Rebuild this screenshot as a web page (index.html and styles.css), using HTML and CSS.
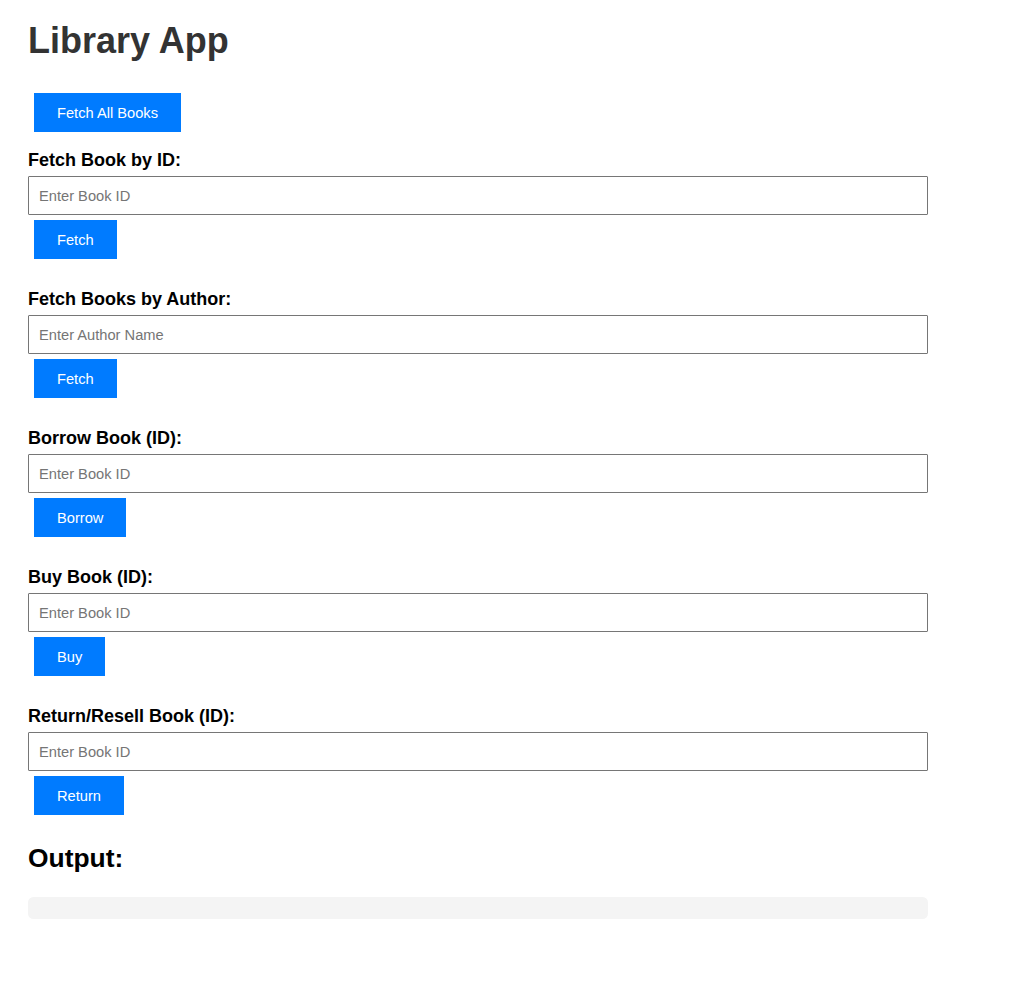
FILE: index.html
```html
<!DOCTYPE html>
<html lang="en">
<head>
<meta charset="utf-8">
<title>Library App</title>
<link rel="stylesheet" href="styles.css">
</head>
<body>
<div class="app">
  <h1 class="title">Library App</h1>
  <button class="btn btn-all">Fetch All Books</button>

  <div class="section">
    <label class="label">Fetch Book by ID:</label>
    <input class="field" type="text" placeholder="Enter Book ID">
    <button class="btn">Fetch</button>
  </div>

  <div class="section">
    <label class="label">Fetch Books by Author:</label>
    <input class="field" type="text" placeholder="Enter Author Name">
    <button class="btn">Fetch</button>
  </div>

  <div class="section">
    <label class="label">Borrow Book (ID):</label>
    <input class="field" type="text" placeholder="Enter Book ID">
    <button class="btn">Borrow</button>
  </div>

  <div class="section">
    <label class="label">Buy Book (ID):</label>
    <input class="field" type="text" placeholder="Enter Book ID">
    <button class="btn">Buy</button>
  </div>

  <div class="section section-last">
    <label class="label">Return/Resell Book (ID):</label>
    <input class="field" type="text" placeholder="Enter Book ID">
    <button class="btn">Return</button>
  </div>

  <h2 class="out-title">Output:</h2>
  <pre class="output"></pre>
</div>
</body>
</html>
```

FILE: styles.css
```css
html, body {
  margin: 0;
  padding: 0;
  background: #ffffff;
}

body {
  font-family: "Liberation Sans", Arial, sans-serif;
  color: #000;
}

.app {
  display: flex;
  flex-direction: column;
  align-items: flex-start;
  width: 900px;
  margin-left: 28px;
  padding-bottom: 40px;
}

.title {
  margin: 21px 0 0;
  font-size: 36px;
  line-height: 40px;
  font-weight: bold;
  color: #333333;
}

.btn {
  display: block;
  box-sizing: border-box;
  margin: 5px 0 0 6px;
  padding: 1px 23px 0;
  height: 39px;
  border: none;
  border-radius: 0;
  background: #007bff;
  color: #ffffff;
  font-family: "Liberation Sans", Arial, sans-serif;
  font-size: 14.67px;
  line-height: 17px;
  cursor: pointer;
}

.btn-all {
  margin-top: 32px;
  margin-bottom: 18px;
}

.section {
  display: flex;
  flex-direction: column;
  align-items: flex-start;
  width: 900px;
  margin-bottom: 30px;
}

.section-last {
  margin-bottom: 28px;
}

.label {
  display: block;
  font-size: 18px;
  line-height: 20px;
  font-weight: bold;
  color: #000;
}

.field {
  display: block;
  box-sizing: border-box;
  width: 900px;
  height: 39px;
  margin: 6px 0 0;
  padding: 0 10px;
  border: 1px solid #767676;
  border-radius: 1px;
  font-family: "Liberation Sans", Arial, sans-serif;
  font-size: 14.67px;
  color: #000;
  background: #fff;
  outline: none;
}

.field::placeholder {
  color: #757575;
}

.out-title {
  margin: 0;
  font-size: 26.4px;
  line-height: 30px;
  font-weight: bold;
  color: #000;
}

.output {
  box-sizing: border-box;
  width: 900px;
  height: 22px;
  margin: 24px 0 0;
  padding: 11px;
  background: #f4f4f4;
  border-radius: 5.5px;
  font-family: "Liberation Mono", monospace;
}
```
